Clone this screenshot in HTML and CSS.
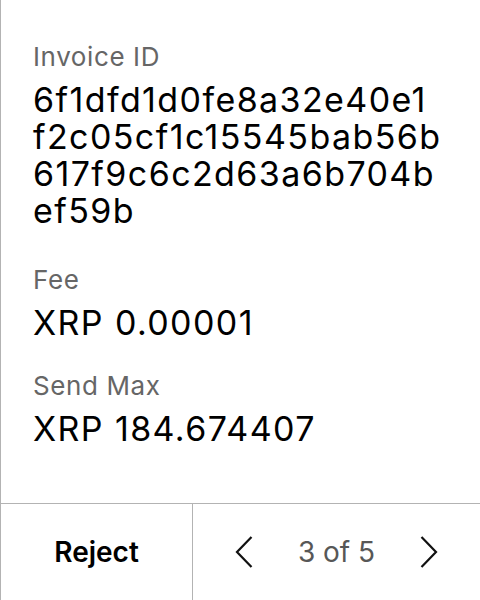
FILE: index.html
```html
<!DOCTYPE html>
<html>
<head>
<meta charset="utf-8">
<link rel="stylesheet" href="styles.css">
</head>
<body>
<div class="screen">
  <div class="details">
    <div class="field">
      <div class="label">Invoice ID</div>
      <div class="value multi">6f1dfd1d0fe8a32e40e1<br>f2c05cf1c15545bab56b<br>617f9c6c2d63a6b704b<br>ef59b</div>
    </div>
    <div class="field">
      <div class="label">Fee</div>
      <div class="value">XRP 0.00001</div>
    </div>
    <div class="field">
      <div class="label">Send Max</div>
      <div class="value">XRP 184.674407</div>
    </div>
  </div>
  <div class="footer">
    <div class="reject">Reject</div>
    <div class="pager">
      <svg class="chev" width="18" height="32" viewBox="0 0 18 32"><path d="M16.5 1 L2 16 L16.5 31" fill="none" stroke="#111" stroke-width="2.2"/></svg>
      <span class="count">3 of 5</span>
      <svg class="chev" width="18" height="32" viewBox="0 0 18 32"><path d="M1.5 1 L16 16 L1.5 31" fill="none" stroke="#111" stroke-width="2.2"/></svg>
    </div>
  </div>
</div>
</body>
</html>
```
FILE: styles.css
```css
html, body {
  margin: 0;
  padding: 0;
  background: #fff;
}
body {
  font-family: Inter, "Noto Sans", sans-serif;
  color: #000;
}
.screen {
  width: 480px;
  height: 600px;
  box-sizing: border-box;
  border-left: 1px solid #b3b3b3;
  display: flex;
  flex-direction: column;
}
.details {
  flex: 1;
  padding: 42px 0 0 32px;
  display: flex;
  flex-direction: column;
  gap: 30px;
}
.label {
  font-size: 26px;
  line-height: 30px;
  letter-spacing: 0.6px;
  color: #666;
}
.value {
  font-size: 34px;
  line-height: 37px;
  letter-spacing: 1.4px;
  margin-top: 9px;
}
.value.multi {
  margin-bottom: 6px;
}
.footer {
  height: 96px;
  border-top: 1px solid #b3b3b3;
  display: flex;
}
.reject {
  width: 191px;
  border-right: 1px solid #b3b3b3;
  display: flex;
  align-items: center;
  justify-content: center;
  font-size: 28px;
  font-weight: 600;
}
.pager {
  flex: 1;
  display: flex;
  align-items: center;
  justify-content: center;
  gap: 45px;
}
.count {
  font-size: 28px;
  color: #575757;
}
.chev {
  display: block;
}
```
